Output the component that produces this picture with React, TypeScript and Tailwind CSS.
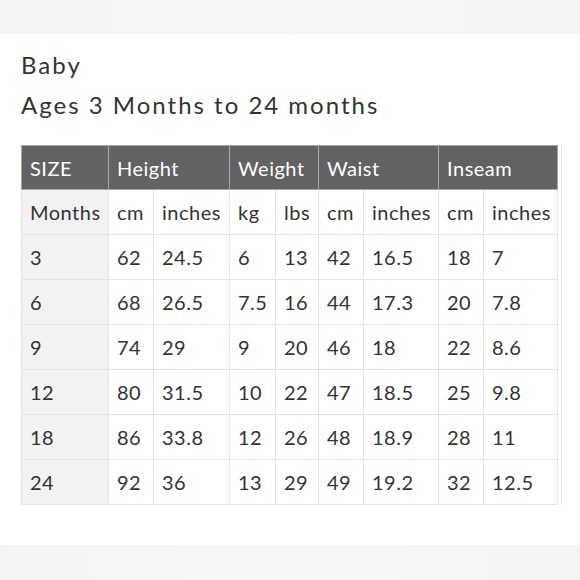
const widths = [
	'w-[87px]',
	'w-[45px]',
	'w-[76px]',
	'w-[46px]',
	'w-[43px]',
	'w-[45px]',
	'w-[75px]',
	'w-[45px]',
	'w-[74px]',
];

const units = ['Months', 'cm', 'inches', 'kg', 'lbs', 'cm', 'inches', 'cm', 'inches'];

const rows = [
	['3', '62', '24.5', '6', '13', '42', '16.5', '18', '7'],
	['6', '68', '26.5', '7.5', '16', '44', '17.3', '20', '7.8'],
	['9', '74', '29', '9', '20', '46', '18', '22', '8.6'],
	['12', '80', '31.5', '10', '22', '47', '18.5', '25', '9.8'],
	['18', '86', '33.8', '12', '26', '48', '18.9', '28', '11'],
	['24', '92', '36', '13', '29', '49', '19.2', '32', '12.5'],
];

const headers = [
	{ label: 'SIZE', span: 1 },
	{ label: 'Height', span: 2 },
	{ label: 'Weight', span: 2 },
	{ label: 'Waist', span: 2 },
	{ label: 'Inseam', span: 2 },
];

const BodyRow = ({ cells }: { cells: string[] }) => (
	<tr className="h-[45px]">
		{cells.map((c, i) => (
			<td
				key={i}
				className={`overflow-visible border border-[#e4e4e4] pr-[4px] pl-[8px] text-left align-middle whitespace-nowrap ${
					i === 0 ? 'bg-[#f2f2f2]' : 'bg-white'
				}`}
			>
				{c}
			</td>
		))}
	</tr>
);

export default function App() {
	return (
		<div className="flex h-[580px] w-[580px] flex-col bg-white font-['Lato','Liberation_Sans',sans-serif] text-[#333]">
			<div className="h-[34px] bg-gradient-to-r from-[#f3f3f3] via-[#f7f7f7] to-[#f3f3f3]" />
			<div className="flex-1 px-[21px]">
				<h1 className="mt-[15px] text-[24px] leading-[32px] font-normal tracking-[2px]">Baby</h1>
				<p className="mt-[8px] text-[24px] leading-[32px] tracking-[2px]">
					Ages 3 Months to 24 months
				</p>
				<div className="mt-[24px] w-fit border-r border-[#e6e6e6] pr-[3px]">
					<table className="w-[536px] table-fixed border-collapse border border-[#dcdcdc] text-[20px] tracking-[0.5px]">
						<colgroup>
							{widths.map((w, i) => (
								<col key={i} className={w} />
							))}
						</colgroup>
						<thead>
							<tr className="h-[44px] bg-[#626262] text-white">
								{headers.map((h) => (
									<th
										key={h.label}
										colSpan={h.span}
										className="border border-[#a8a8a8] px-[8px] text-left font-normal"
									>
										{h.label}
									</th>
								))}
							</tr>
						</thead>
						<tbody>
							<BodyRow cells={units} />
							{rows.map((r) => (
								<BodyRow key={r[0]} cells={r} />
							))}
						</tbody>
					</table>
				</div>
			</div>
			<div className="h-[35px] bg-gradient-to-r from-[#f3f3f3] via-[#f8f8f8] to-[#f3f3f3]" />
		</div>
	);
}
